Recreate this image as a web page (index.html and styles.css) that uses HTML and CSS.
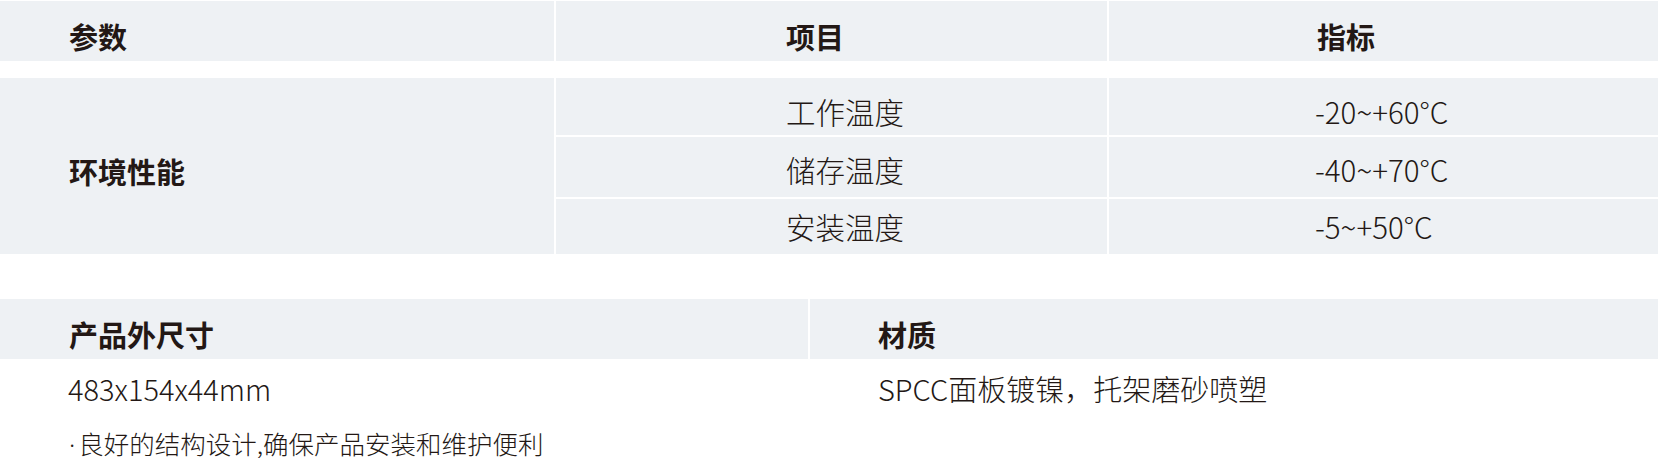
FILE: index.html
```html
<!DOCTYPE html>
<html lang="zh-CN">
<head>
<meta charset="utf-8">
<title>参数</title>
<link rel="stylesheet" href="styles.css">
</head>
<body>
<div class="page">
  <div class="spec">
    <div class="spec-head">
      <div class="cell head c1">参数</div>
      <div class="cell head c2">项目</div>
      <div class="cell head c3">指标</div>
    </div>
    <div class="spec-body">
      <div class="cell group c1">环境性能</div>
      <div class="cell item c2 r1">工作温度</div>
      <div class="cell item c3 r1">-20~+60°C</div>
      <div class="cell item c2 r2">储存温度</div>
      <div class="cell item c3 r2">-40~+70°C</div>
      <div class="cell item c2 r3">安装温度</div>
      <div class="cell item c3 r3">-5~+50°C</div>
    </div>
  </div>

  <div class="info">
    <div class="info-head">
      <div class="cell head i1">产品外尺寸</div>
      <div class="cell head i2">材质</div>
    </div>
    <div class="info-body">
      <div class="val i1">483x154x44mm</div>
      <div class="val i2">SPCC面板镀镍，托架磨砂喷塑</div>
    </div>
    <p class="note"><span class="dot">·</span>良好的结构设计,确保产品安装和维护便利</p>
  </div>
</div>
</body>
</html>
```

FILE: styles.css
```css
html, body {
  margin: 0;
  padding: 0;
  background: #ffffff;
}

body {
  font-family: "Noto Sans CJK SC", "Noto Sans", sans-serif;
  color: #231815;
}

.page {
  width: 1658px;
  padding-top: 1px;
}

.cell {
  background: #eef1f4;
  box-sizing: border-box;
  display: flex;
  align-items: center;
}

.head {
  font-size: 29px;
  font-weight: 700;
  line-height: 1;
  height: 60px;
  padding-top: 11px;
}

.spec-head,
.spec-body {
  display: grid;
  grid-template-columns: 554px 551px 549px;
  column-gap: 2px;
}

.spec-body {
  margin-top: 17px;
  grid-template-rows: 57px 60px 55px;
  row-gap: 2px;
}

.spec-head .c1 { padding-left: 69px; }
.spec-head .c2 { padding-left: 230px; }
.spec-head .c3 { padding-left: 208px; }

.group {
  grid-column: 1;
  grid-row: 1 / span 3;
  font-size: 29px;
  font-weight: 700;
  line-height: 1;
  padding-left: 69px;
  padding-top: 10px;
}

.item {
  font-size: 29.5px;
  font-weight: 300;
  line-height: 1;
  padding-top: 10px;
}

.item.c2 { grid-column: 2; padding-left: 230px; }
.item.c3 { grid-column: 3; padding-left: 206px; }
.r1 { grid-row: 1; }
.r2 { grid-row: 2; padding-top: 6px; }
.r3 { grid-row: 3; padding-top: 0; }

.info {
  margin-top: 45px;
}

.info-head,
.info-body {
  display: grid;
  grid-template-columns: 808px 848px;
  column-gap: 2px;
}

.info-head .i1 { padding-left: 69px; }
.info-head .i2 { padding-left: 68px; }

.info-body {
  height: 62px;
  align-items: center;
}

.val {
  font-size: 29px;
  font-weight: 300;
  line-height: 1;
  padding-bottom: 3px;
}

.val.i1 { padding-left: 68px; }
.val.i2 { padding-left: 68px; }

.note {
  margin: 0;
  padding-left: 69px;
  padding-top: 9px;
  font-size: 25.5px;
  font-weight: 300;
  line-height: 1;
}

.dot {
  font-family: "Noto Sans", sans-serif;
  margin-right: 3px;
}
```
